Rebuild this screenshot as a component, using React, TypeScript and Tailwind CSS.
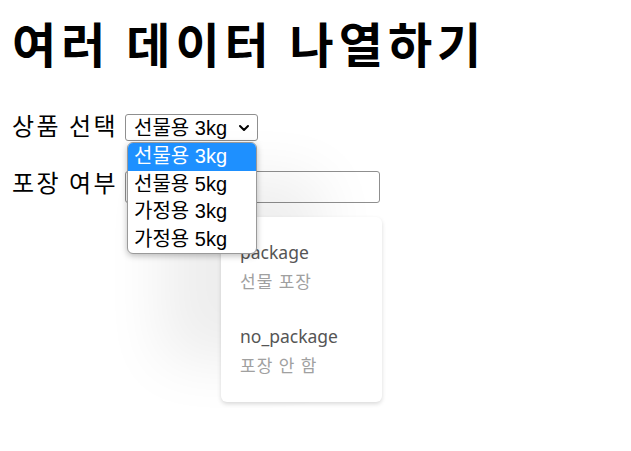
import { ChevronDown } from "lucide-react";

const products = ["선물용 3kg", "선물용 5kg", "가정용 3kg", "가정용 5kg"];

const packages = [
  { value: "package", label: "선물 포장" },
  { value: "no_package", label: "포장 안 함" },
];

export default function App() {
  return (
    <div className="min-h-screen bg-white px-[12px] text-black [font-family:'Noto_Sans_CJK_KR','Noto_Sans',sans-serif]">
      <h1 className="pt-[18px] text-[48px] font-bold leading-[48px] tracking-[5px]">여러 데이터 나열하기</h1>

      {/* 상품 선택 - select open */}
      <div className="mt-[48px] flex items-center">
        <label className="w-[113px] text-[24px] leading-[27px] tracking-[2.5px] -mt-[6px]">상품 선택</label>
        <div className="relative [font-family:'Liberation_Sans','Noto_Sans_CJK_KR',sans-serif]">
          <div className="flex h-[27px] w-[133px] items-center justify-between rounded-[3px] border border-[#8f8f8f] pl-[8px] pr-[5px] text-[20px] leading-none">
            <span>선물용 3kg</span>
            <ChevronDown size={16} strokeWidth={3} />
          </div>
          {/* options list */}
          <ul className="absolute left-[2px] top-[28px] z-20 w-[130px] overflow-hidden rounded-[6px] border border-[#9a9a9a] bg-white shadow-[0_2px_6px_rgba(0,0,0,0.25)]">
            {products.map((p, i) => (
              <li
                key={p}
                className={`h-[27.5px] pl-[6px] text-[20px] leading-[27px] ${
                  i === 0 ? "bg-[#1e90ff] text-white" : "text-black"
                }`}
              >
                {p}
              </li>
            ))}
          </ul>
        </div>
      </div>

      {/* 포장 여부 - datalist open */}
      <div className="mt-[30px] flex items-center">
        <label className="w-[113px] text-[24px] leading-[32px] tracking-[2.5px] -mt-[10px]">포장 여부</label>
        <div className="relative">
          <input
            list="pack"
            className="h-[32px] w-[255px] rounded-[3px] border border-[#8f8f8f] px-[6px] text-[20px] outline-none"
          />
          <div className="absolute left-[96px] top-[46px] z-10 h-[185px] w-[161px] rounded-[6px] bg-white px-[19px] pt-[21px] shadow-[0_2px_4px_rgba(0,0,0,0.15),-60px_-40px_60px_rgba(0,0,0,0.07)] [font-family:'Noto_Sans','Noto_Sans_CJK_KR',sans-serif]">
            {packages.map((p) => (
              <div key={p.value} className="mb-[26px]">
                <div className="text-[17.5px] leading-[29px] text-[#555]">{p.value}</div>
                <div className="text-[17px] leading-[29px] tracking-[1px] text-[#a0a0a0]">{p.label}</div>
              </div>
            ))}
          </div>
        </div>
      </div>
    </div>
  );
}
